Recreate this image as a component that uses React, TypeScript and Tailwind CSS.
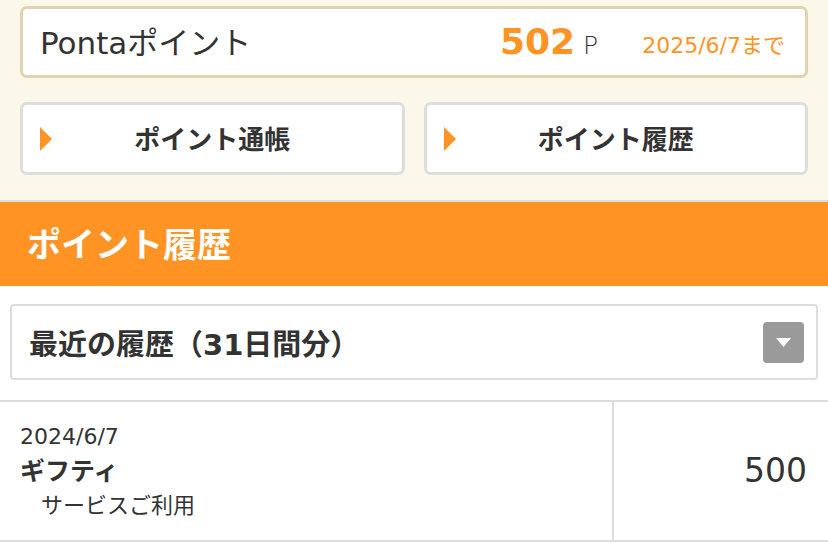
function Triangle() {
  return (
    <svg width="12" height="24" viewBox="0 0 12 24" className="shrink-0">
      <path d="M0 0 L12 12 L0 24 Z" fill="#ff9323" />
    </svg>
  );
}

function NavButton({ label }: { label: string }) {
  return (
    <button className="flex-1 h-[73px] flex items-center bg-white border-[3px] border-[#dddddd] rounded-[7px] pl-[17px] pr-[29px]">
      <Triangle />
      <span className="flex-1 pt-[4px] text-center text-[26px] font-bold text-[#333333]">
        {label}
      </span>
    </button>
  );
}

export default function App() {
  return (
    <div
      className="w-[828px] h-[543px] overflow-hidden bg-white text-[#333333]"
      style={{ fontFamily: '"DejaVu Sans", "Noto Sans CJK JP", sans-serif' }}
    >
      <div className="bg-[#fbf8ea] px-5 pt-[6px] pb-[25px] border-b-2 border-[#dddddd]">
        <div className="h-[72px] flex items-center bg-white border-[3px] border-[#e0d4b0] rounded-[7px] pl-[17px] pr-[20px]">
          <span className="flex-1 pt-[2px] text-[31px] text-[#333333]">Pontaポイント</span>
          <span className="text-[36px] font-bold text-[#ff9323] leading-none">502</span>
          <span className="pt-[6px] text-[25px] font-light text-[#333333] ml-[8px] leading-none">P</span>
          <span className="pt-[6px] text-[22px] text-[#ff9323] ml-[44px]">2025/6/7まで</span>
        </div>
        <div className="flex gap-[19px] mt-[24px]">
          <NavButton label="ポイント通帳" />
          <NavButton label="ポイント履歴" />
        </div>
      </div>

      <div className="h-[84px] bg-[#ff9323] flex items-center px-[27px]">
        <h1 className="pt-[2px] text-[34px] font-bold text-white">ポイント履歴</h1>
      </div>

      <div className="px-[10px] pt-[18px] pb-5">
        <div className="h-[76px] flex items-center border-2 border-[#dddddd] rounded-[4px] pl-[17px] pr-[12px]">
          <span className="flex-1 pt-[8px] text-[29px] font-bold text-[#333333]">最近の履歴（31日間分）</span>
          <span className="w-[41px] h-[41px] bg-[#9a9a9a] rounded-[4px] flex items-center justify-center">
            <svg width="15" height="9" viewBox="0 0 15 9">
              <path d="M0 0 L15 0 L7.5 9 Z" fill="#ffffff" />
            </svg>
          </span>
        </div>
      </div>

      <div className="flex border-t-2 border-b-2 border-[#dddddd] h-[142px]">
        <div className="w-[614px] border-r-2 border-[#dddddd] pl-5 pt-[21px]">
          <p className="text-[22px] leading-[28px] text-[#333333]">2024/6/7</p>
          <p className="pt-[3px] text-[25px] leading-[36px] font-bold text-[#333333]">ギフティ</p>
          <p className="text-[22px] leading-[32px] pl-[21px] text-[#333333]">サービスご利用</p>
        </div>
        <div className="flex-1 flex items-center justify-end pr-[21px]">
          <span className="text-[33px] text-[#333333]">500</span>
        </div>
      </div>
    </div>
  );
}
